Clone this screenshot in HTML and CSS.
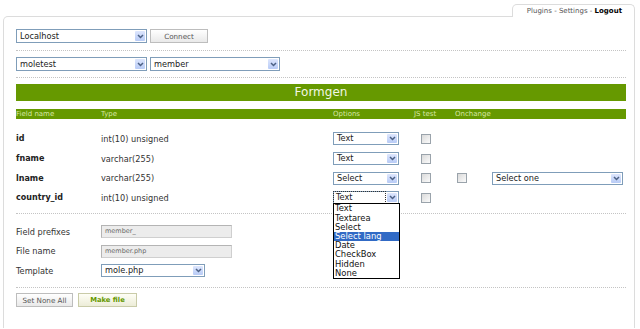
FILE: index.html
```html
<!DOCTYPE html>
<html lang="en">
<head>
    <meta charset="UTF-8">
    <title>Formgen</title>
    <link rel="stylesheet" href="styles.css">
</head>
<body>
    <div class="topbar">
        <div class="tab">Plugins - Settings - <b>Logout</b></div>
    </div>

    <div class="panel">
        <div class="row sep first">
            <div class="sel w-host"><span class="sel-val">Localhost</span><span class="sel-btn"><svg width="7" height="5" viewBox="0 0 7 5"><path d="M1 1l2.5 2.5L6 1" stroke="#4d6185" stroke-width="1.5" fill="none"/></svg></span></div>
            <button class="btn connect">Connect</button>
        </div>

        <div class="row sep second">
            <div class="sel w-host"><span class="sel-val">moletest</span><span class="sel-btn"><svg width="7" height="5" viewBox="0 0 7 5"><path d="M1 1l2.5 2.5L6 1" stroke="#4d6185" stroke-width="1.5" fill="none"/></svg></span></div>
            <div class="sel w-table"><span class="sel-val">member</span><span class="sel-btn"><svg width="7" height="5" viewBox="0 0 7 5"><path d="M1 1l2.5 2.5L6 1" stroke="#4d6185" stroke-width="1.5" fill="none"/></svg></span></div>
        </div>

        <div class="title-bar">Formgen</div>

        <div class="cols head">
            <span>Field name</span>
            <span>Type</span>
            <span>Options</span>
            <span>JS test</span>
            <span>Onchange</span>
            <span></span>
        </div>

        <div class="fields sep">
            <div class="cols field">
                <span class="fname">id</span>
                <span>int(10) unsigned</span>
                <div class="sel small w-opt"><span class="sel-val">Text</span><span class="sel-btn"><svg width="7" height="5" viewBox="0 0 7 5"><path d="M1 1l2.5 2.5L6 1" stroke="#4d6185" stroke-width="1.5" fill="none"/></svg></span></div>
                <span class="check js"></span>
                <span></span>
                <span></span>
            </div>
            <div class="cols field">
                <span class="fname">fname</span>
                <span>varchar(255)</span>
                <div class="sel small w-opt"><span class="sel-val">Text</span><span class="sel-btn"><svg width="7" height="5" viewBox="0 0 7 5"><path d="M1 1l2.5 2.5L6 1" stroke="#4d6185" stroke-width="1.5" fill="none"/></svg></span></div>
                <span class="check js"></span>
                <span></span>
                <span></span>
            </div>
            <div class="cols field">
                <span class="fname">lname</span>
                <span>varchar(255)</span>
                <div class="sel small w-opt"><span class="sel-val">Select</span><span class="sel-btn"><svg width="7" height="5" viewBox="0 0 7 5"><path d="M1 1l2.5 2.5L6 1" stroke="#4d6185" stroke-width="1.5" fill="none"/></svg></span></div>
                <span class="check js"></span>
                <span class="check onchange"></span>
                <div class="sel small w-one"><span class="sel-val">Select one</span><span class="sel-btn"><svg width="7" height="5" viewBox="0 0 7 5"><path d="M1 1l2.5 2.5L6 1" stroke="#4d6185" stroke-width="1.5" fill="none"/></svg></span></div>
            </div>
            <div class="cols field">
                <span class="fname">country_id</span>
                <span>int(10) unsigned</span>
                <div class="opt-cell">
                    <div class="sel small w-opt focus"><span class="sel-val">Text</span><span class="sel-btn"><svg width="7" height="5" viewBox="0 0 7 5"><path d="M1 1l2.5 2.5L6 1" stroke="#4d6185" stroke-width="1.5" fill="none"/></svg></span></div>
                    <ul class="dropdown">
                        <li>Text</li>
                        <li>Textarea</li>
                        <li>Select</li>
                        <li class="active">Select lang</li>
                        <li>Date</li>
                        <li>CheckBox</li>
                        <li>Hidden</li>
                        <li>None</li>
                    </ul>
                </div>
                <span class="check js"></span>
                <span></span>
                <span></span>
            </div>
        </div>

        <div class="settings sep">
            <div class="setting">
                <span>Field prefixes</span>
                <div class="input">member_</div>
            </div>
            <div class="setting">
                <span>File name</span>
                <div class="input">member.php</div>
            </div>
            <div class="setting">
                <span>Template</span>
                <div class="sel small w-tpl"><span class="sel-val">mole.php</span><span class="sel-btn"><svg width="7" height="5" viewBox="0 0 7 5"><path d="M1 1l2.5 2.5L6 1" stroke="#4d6185" stroke-width="1.5" fill="none"/></svg></span></div>
            </div>
        </div>

        <div class="actions">
            <button class="btn none-all">Set None All</button>
            <button class="btn make">Make file</button>
        </div>
    </div>
</body>
</html>
```

FILE: styles.css
```css
body {
    margin: 0;
    background: #fff;
    font-family: 'DejaVu Sans', Verdana, sans-serif;
    font-size: 8.2px;
    color: #333;
}

.topbar {
    display: flex;
    justify-content: flex-end;
    padding-top: 4px;
    margin-right: 5px;
}

.tab {
    position: relative;
    z-index: 1;
    width: 109px;
    height: 12px;
    padding-right: 12px;
    margin-bottom: -1px;
    border: 1px solid #dcdcdc;
    border-bottom: none;
    border-radius: 5px 5px 0 0;
    background: #fff;
    font-size: 7px;
    line-height: 12px;
    text-align: right;
    color: #555;
}

.tab b {
    color: #000;
}

.panel {
    margin: 0 5px 0 3px;
    padding: 12px 8px 21px 12px;
    border: 1px solid #dcdcdc;
    border-bottom: none;
    border-top-left-radius: 5px;
}

.sep {
    border-bottom: 1px dotted #c4c4c4;
}

.row {
    display: flex;
    gap: 3px;
}

.row.first {
    padding-bottom: 7px;
}

.row.second {
    margin-top: 6px;
    padding-bottom: 6px;
}

/* fake xp style selects */
.sel {
    display: flex;
    box-sizing: border-box;
    height: 14px;
    border: 1px solid #7f9db9;
    background: #fff;
}

.sel.small {
    height: 13px;
}

.sel-val {
    flex: 1;
    padding-left: 3px;
    line-height: 12px;
    color: #222;
    white-space: nowrap;
}

.sel.small .sel-val {
    line-height: 11px;
}

.sel.focus .sel-val {
    margin: 0 1px 0 0;
    outline: 1px dotted #333;
    padding-left: 2px;
}

.sel-btn {
    display: flex;
    align-items: center;
    justify-content: center;
    width: 10px;
    margin: 1px;
    border-radius: 1px;
    background: linear-gradient(#dde6fd, #b8cbf6);
}

.w-host { width: 131px; }
.w-table { width: 130px; }
.w-opt { width: 66px; }
.w-one { width: 131px; }
.w-tpl { width: 104px; }

.btn {
    box-sizing: border-box;
    height: 14px;
    padding: 0;
    border: 1px solid #bdbdbd;
    background: linear-gradient(#fff, #e9e9e9);
    font-family: 'DejaVu Sans', Verdana, sans-serif;
    font-size: 7.2px;
    color: #555;
}

.connect {
    width: 58px;
}

.title-bar {
    margin-top: 6px;
    height: 17px;
    background: #669900;
    color: #f2f7e4;
    font-size: 12px;
    line-height: 17px;
    text-align: center;
}

.cols {
    display: grid;
    grid-template-columns: 85px 232px 81px 41px 37px 1fr;
    align-items: center;
}

.head {
    margin-top: 8px;
    height: 10px;
    background: #669900;
    color: #d6e6a6;
    font-size: 7px;
    line-height: 10px;
}

.fields {
    margin-top: 10px;
    padding-bottom: 5px;
}

.field {
    height: 19.7px;
}

.fname {
    font-weight: bold;
    font-size: 8px;
    color: #222;
}

.check {
    box-sizing: border-box;
    width: 10px;
    height: 10px;
    border: 1px solid #9aa3ab;
    background: linear-gradient(135deg, #dadada, #fbfbfb);
}

.check.js {
    margin-left: 7px;
}

.check.onchange {
    margin-left: 2px;
}

.opt-cell {
    position: relative;
}

.dropdown {
    position: absolute;
    top: 12px;
    left: 0;
    z-index: 2;
    width: 65px;
    margin: 0;
    padding: 0;
    list-style: none;
    border: 1px solid #000;
    background: #fff;
    font-size: 8.4px;
    line-height: 9.2px;
    color: #111;
}

.dropdown li {
    padding-left: 1px;
}

.dropdown li.active {
    background: #316ac5;
    color: #fff;
}

.settings {
    margin-top: 8px;
    padding-bottom: 7px;
}

.setting {
    display: grid;
    grid-template-columns: 85px auto;
    align-items: center;
    justify-items: start;
    height: 19.5px;
}

.input {
    box-sizing: border-box;
    width: 131px;
    height: 13px;
    padding-left: 3px;
    border: 1px solid #cfcfcf;
    border-top-color: #b4b4b4;
    border-left-color: #b4b4b4;
    background: #ececec;
    font-size: 6.5px;
    line-height: 11px;
    color: #666;
}

.actions {
    display: flex;
    gap: 5px;
    margin-top: 5px;
}

.none-all {
    width: 57px;
}

.make {
    width: 59px;
    border-color: #c9cba8;
    background: linear-gradient(#fefef6, #ececd8);
    color: #669900;
    font-weight: bold;
    font-size: 6.8px;
}
```
